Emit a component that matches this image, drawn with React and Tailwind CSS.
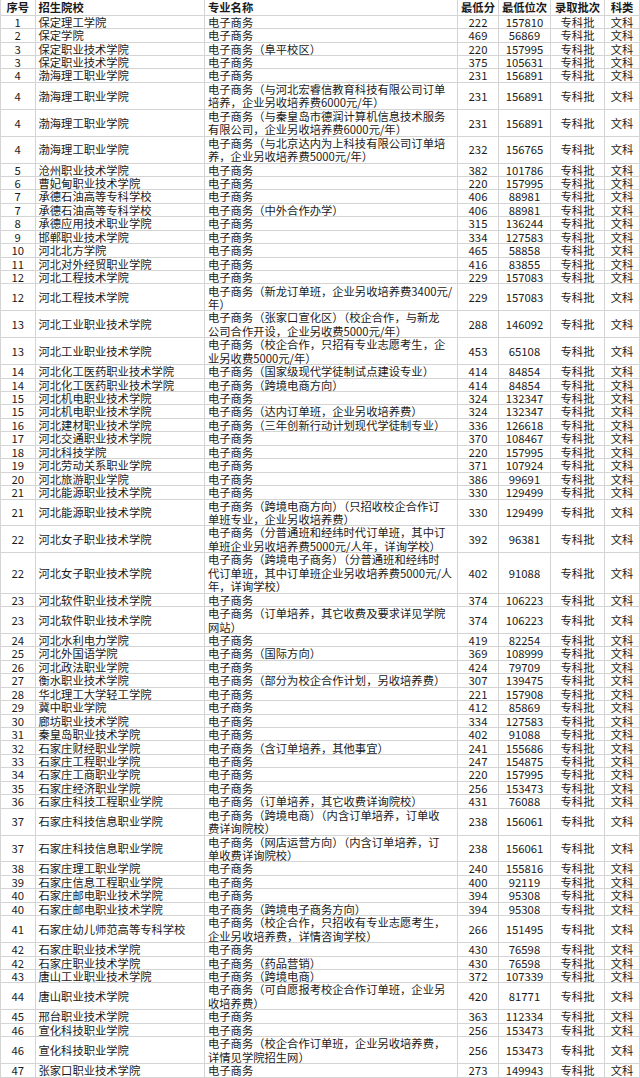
import React from 'react';

const R = [
[1,'保定理工学院','电子商务',222,157810],
[2,'保定学院','电子商务',469,56869],
[3,'保定职业技术学院','电子商务（阜平校区）',220,157995],
[3,'保定职业技术学院','电子商务',375,105631],
[4,'渤海理工职业学院','电子商务',231,156891],
[4,'渤海理工职业学院','电子商务（与河北宏睿信教育科技有限公司订单|培养，企业另收培养费6000元/年）',231,156891],
[4,'渤海理工职业学院','电子商务（与秦皇岛市德润计算机信息技术服务|有限公司，企业另收培养费6000元/年）',231,156891],
[4,'渤海理工职业学院','电子商务（与北京达内为上科技有限公司订单培|养，企业另收培养费5000元/年）',232,156765],
[5,'沧州职业技术学院','电子商务',382,101786],
[6,'曹妃甸职业技术学院','电子商务',220,157995],
[7,'承德石油高等专科学校','电子商务',406,88981],
[7,'承德石油高等专科学校','电子商务（中外合作办学）',406,88981],
[8,'承德应用技术职业学院','电子商务',315,136244],
[9,'邯郸职业技术学院','电子商务',334,127583],
[10,'河北北方学院','电子商务',465,58858],
[11,'河北对外经贸职业学院','电子商务',416,83855],
[12,'河北工程技术学院','电子商务',229,157083],
[12,'河北工程技术学院','电子商务（新龙订单班，企业另收培养费3400元/|年）',229,157083],
[13,'河北工业职业技术学院','电子商务（张家口宣化区）（校企合作，与新龙|公司合作开设，企业另收费5000元/年）',288,146092],
[13,'河北工业职业技术学院','电子商务（校企合作，只招有专业志愿考生，企|业另收费5000元/年）',453,65108],
[14,'河北化工医药职业技术学院','电子商务（国家级现代学徒制试点建设专业）',414,84854],
[14,'河北化工医药职业技术学院','电子商务（跨境电商方向）',414,84854],
[15,'河北机电职业技术学院','电子商务',324,132347],
[15,'河北机电职业技术学院','电子商务（达内订单班，企业另收培养费）',324,132347],
[16,'河北建材职业技术学院','电子商务（三年创新行动计划现代学徒制专业）',336,126618],
[17,'河北交通职业技术学院','电子商务',370,108467],
[18,'河北科技学院','电子商务',220,157995],
[19,'河北劳动关系职业学院','电子商务',371,107924],
[20,'河北旅游职业学院','电子商务',386,99691],
[21,'河北能源职业技术学院','电子商务',330,129499],
[21,'河北能源职业技术学院','电子商务（跨境电商方向）（只招收校企合作订|单班专业，企业另收培养费）',330,129499],
[22,'河北女子职业技术学院','电子商务（分普通班和经纬时代订单班，其中订|单班企业另收培养费5000元/人年，详询学校）',392,96381],
[22,'河北女子职业技术学院','电子商务（跨境电子商务）（分普通班和经纬时|代订单班，其中订单班企业另收培养费5000元/人|年，详询学校）',402,91088],
[23,'河北软件职业技术学院','电子商务',374,106223],
[23,'河北软件职业技术学院','电子商务（订单培养，其它收费及要求详见学院|网站）',374,106223],
[24,'河北水利电力学院','电子商务',419,82254],
[25,'河北外国语学院','电子商务（国际方向）',369,108999],
[26,'河北政法职业学院','电子商务',424,79709],
[27,'衡水职业技术学院','电子商务（部分为校企合作计划，另收培养费）',307,139475],
[28,'华北理工大学轻工学院','电子商务',221,157908],
[29,'冀中职业学院','电子商务',412,85869],
[30,'廊坊职业技术学院','电子商务',334,127583],
[31,'秦皇岛职业技术学院','电子商务',402,91088],
[32,'石家庄财经职业学院','电子商务（含订单培养，其他事宜）',241,155686],
[33,'石家庄工程职业学院','电子商务',247,154875],
[34,'石家庄工商职业学院','电子商务',220,157995],
[35,'石家庄经济职业学院','电子商务',256,153473],
[36,'石家庄科技工程职业学院','电子商务（订单培养，其它收费详询院校）',431,76088],
[37,'石家庄科技信息职业学院','电子商务（跨境电商）（内含订单培养，订单收|费详询院校）',238,156061],
[37,'石家庄科技信息职业学院','电子商务（网店运营方向）（内含订单培养，订|单收费详询院校）',238,156061],
[38,'石家庄理工职业学院','电子商务',240,155816],
[39,'石家庄信息工程职业学院','电子商务',400,92119],
[40,'石家庄邮电职业技术学院','电子商务',394,95308],
[40,'石家庄邮电职业技术学院','电子商务（跨境电子商务方向）',394,95308],
[41,'石家庄幼儿师范高等专科学校','电子商务（校企合作，只招收有专业志愿考生，|企业另收培养费，详情咨询学校）',266,151495],
[42,'石家庄职业技术学院','电子商务',430,76598],
[42,'石家庄职业技术学院','电子商务（药品营销）',430,76598],
[43,'唐山工业职业技术学院','电子商务（跨境电商）',372,107339],
[44,'唐山职业技术学院','电子商务（可自愿报考校企合作订单班，企业另|收培养费）',420,81771],
[45,'邢台职业技术学院','电子商务',363,112334],
[46,'宣化科技职业学院','电子商务',256,153473],
[46,'宣化科技职业学院','电子商务（校企合作订单班，企业另收培养费，|详情见学院招生网）',256,153473],
[47,'张家口职业技术学院','电子商务',273,149943],
];

const H = { 1: 'h-[13.45px]', 2: 'h-[26.9px]', 3: 'h-[40.35px]' };
const GRID = 'grid grid-cols-[35.5px_169.5px_253px_41px_52px_54px_35px]';
const cell = 'flex items-center border-b border-r border-[#d4d4d4] whitespace-nowrap';

export default function App() {
  return (
    <div className="w-[640px] h-[1078px] overflow-hidden bg-white text-[#1a1a1a] text-[11.3px] leading-[12.4px] font-['Noto_Sans_CJK_SC',sans-serif]">
      <div className={`${GRID} h-[15.7px] font-bold`}>
        <div className={`${cell} justify-center border-l`}>序号</div>
        <div className={`${cell} pl-[3px]`}>招生院校</div>
        <div className={`${cell} pl-[3px]`}>专业名称</div>
        <div className={`${cell} justify-center`}>最低分</div>
        <div className={`${cell} justify-center`}>最低位次</div>
        <div className={`${cell} justify-center`}>录取批次</div>
        <div className={`${cell} justify-center`}>科类</div>
      </div>
      {R.map((r, i) => {
        const lines = r[2].split('|');
        return (
          <div key={i} className={`${GRID} ${H[lines.length]}`}>
            <div className={`${cell} justify-center border-l`}>{r[0]}</div>
            <div className={`${cell} pl-[3px]`}>{r[1]}</div>
            <div className={`${cell} pl-[3px]`}>
              <div className="flex flex-col gap-[1px]">
                {lines.map((l, j) => <div key={j}>{l}</div>)}
              </div>
            </div>
            <div className={`${cell} justify-center`}>{r[3]}</div>
            <div className={`${cell} justify-center`}>{r[4]}</div>
            <div className={`${cell} justify-center`}>专科批</div>
            <div className={`${cell} justify-center`}>文科</div>
          </div>
        );
      })}
    </div>
  );
}
